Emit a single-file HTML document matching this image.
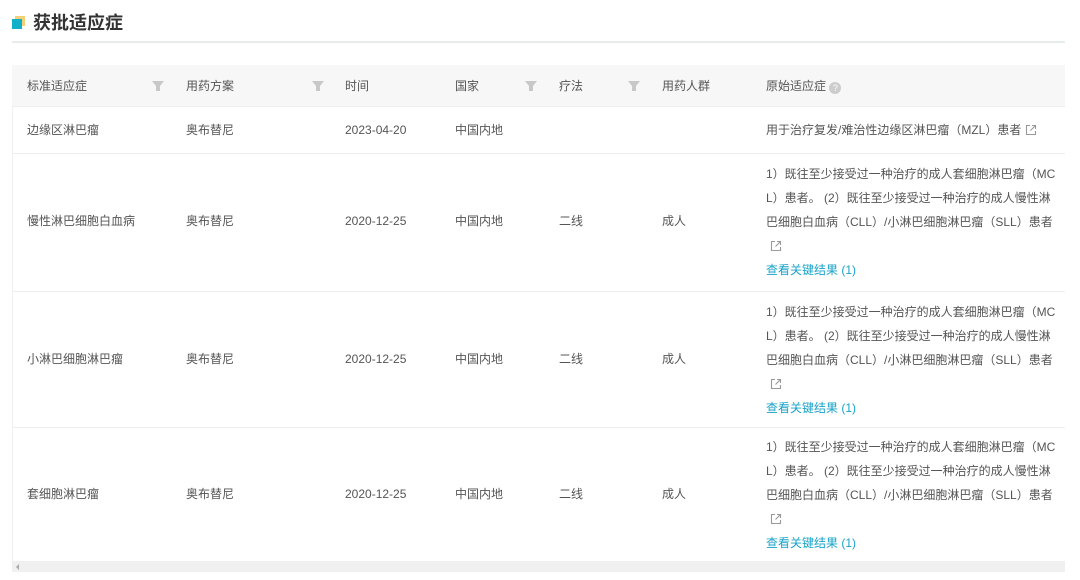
<!DOCTYPE html><html><head><meta charset="utf-8"><style>
body{margin:0;width:1080px;height:580px;background:#fff;font-family:"Liberation Sans","Noto Sans CJK SC",sans-serif;font-size:12px;color:#555;position:relative;overflow:hidden}
.a{position:absolute;white-space:nowrap;line-height:16px}
.t{position:absolute;left:12px;top:65px;width:1053px;height:496px;border-left:1px solid #f0f0f0}
.hdr{position:absolute;left:12px;top:65px;width:1053px;height:41px;background:#f7f7f7;border-bottom:1px solid #eee}
.ln{position:absolute;left:12px;width:1053px;height:1px;background:#eee}
.f{position:absolute}
.orig{position:absolute;left:766px;width:290px;line-height:24px;white-space:normal;word-break:break-all}
.lk{color:#1aa3c8}
svg.e{vertical-align:-2px;margin-left:4px}
</style></head><body>
<svg class="a" style="left:11px;top:15px" width="16" height="16"><rect x="4" y="1" width="10" height="10" fill="#f5cf76"/><rect x="1" y="4" width="10" height="10" fill="#0fb0c8"/></svg>
<div class="a" style="left:33px;top:11px;font-size:18px;line-height:24px;font-weight:bold;color:#333">获批适应症</div>
<div class="a" style="left:12px;top:41px;width:1053px;height:2px;background:#e6eceb"></div>
<div class="t"></div>
<div class="hdr"></div>
<svg width="0" height="0" style="position:absolute"><defs><symbol id="fl" viewBox="0 0 12 12"><path d="M0 1h12L8 6v5H4V6z" fill="#c8c8c8"/></symbol><symbol id="ex" viewBox="0 0 12 12"><path d="M5 1.5H1.5v9h9V7M7 1.5h3.5V5M10.5 1.5L5.5 6.5" fill="none" stroke="#999" stroke-width="1.1"/></symbol></defs></svg>
<div class="a" style="left:27px;top:78px">标准适应症</div><svg class="f" style="left:152px;top:80px" width="12" height="12"><use href="#fl"/></svg>
<div class="a" style="left:186px;top:78px">用药方案</div><svg class="f" style="left:312px;top:80px" width="12" height="12"><use href="#fl"/></svg>
<div class="a" style="left:345px;top:78px">时间</div>
<div class="a" style="left:455px;top:78px">国家</div><svg class="f" style="left:525px;top:80px" width="12" height="12"><use href="#fl"/></svg>
<div class="a" style="left:559px;top:78px">疗法</div><svg class="f" style="left:628px;top:80px" width="12" height="12"><use href="#fl"/></svg>
<div class="a" style="left:662px;top:78px">用药人群</div>
<div class="a" style="left:766px;top:78px">原始适应症 <span style="display:inline-block;width:12px;height:12px;border-radius:50%;background:#ccc;color:#fff;font-size:9px;text-align:center;line-height:12px;vertical-align:-1px">?</span></div>

<div class="a" style="left:27px;top:122px">边缘区淋巴瘤</div>
<div class="a" style="left:186px;top:122px">奥布替尼</div>
<div class="a" style="left:345px;top:122px">2023-04-20</div>
<div class="a" style="left:455px;top:122px">中国内地</div>
<div class="a" style="left:766px;top:122px">用于治疗复发/难治性边缘区淋巴瘤（MZL）患者<svg class="e" width="12" height="12"><use href="#ex"/></svg></div>
<div class="ln" style="top:153px"></div>

<div class="a" style="left:27px;top:213px">慢性淋巴细胞白血病</div>
<div class="a" style="left:186px;top:213px">奥布替尼</div>
<div class="a" style="left:345px;top:213px">2020-12-25</div>
<div class="a" style="left:455px;top:213px">中国内地</div>
<div class="a" style="left:559px;top:213px">二线</div>
<div class="a" style="left:662px;top:213px">成人</div>
<div class="orig" style="top:162px">1）既往至少接受过一种治疗的成人套细胞淋巴瘤（MCL）患者。 (2）既往至少接受过一种治疗的成人慢性淋巴细胞白血病（CLL）/小淋巴细胞淋巴瘤（SLL）患者 <svg class="e" width="12" height="12"><use href="#ex"/></svg><br><span class="lk">查看关键结果 (1)</span></div>
<div class="ln" style="top:291px"></div>

<div class="a" style="left:27px;top:351px">小淋巴细胞淋巴瘤</div>
<div class="a" style="left:186px;top:351px">奥布替尼</div>
<div class="a" style="left:345px;top:351px">2020-12-25</div>
<div class="a" style="left:455px;top:351px">中国内地</div>
<div class="a" style="left:559px;top:351px">二线</div>
<div class="a" style="left:662px;top:351px">成人</div>
<div class="orig" style="top:300px">1）既往至少接受过一种治疗的成人套细胞淋巴瘤（MCL）患者。 (2）既往至少接受过一种治疗的成人慢性淋巴细胞白血病（CLL）/小淋巴细胞淋巴瘤（SLL）患者 <svg class="e" width="12" height="12"><use href="#ex"/></svg><br><span class="lk">查看关键结果 (1)</span></div>
<div class="ln" style="top:427px"></div>

<div class="a" style="left:27px;top:486px">套细胞淋巴瘤</div>
<div class="a" style="left:186px;top:486px">奥布替尼</div>
<div class="a" style="left:345px;top:486px">2020-12-25</div>
<div class="a" style="left:455px;top:486px">中国内地</div>
<div class="a" style="left:559px;top:486px">二线</div>
<div class="a" style="left:662px;top:486px">成人</div>
<div class="orig" style="top:435px">1）既往至少接受过一种治疗的成人套细胞淋巴瘤（MCL）患者。 (2）既往至少接受过一种治疗的成人慢性淋巴细胞白血病（CLL）/小淋巴细胞淋巴瘤（SLL）患者 <svg class="e" width="12" height="12"><use href="#ex"/></svg><br><span class="lk">查看关键结果 (1)</span></div>

<div class="a" style="left:12px;top:561px;width:1053px;height:11px;background:#f0f0f0"></div>
<div class="a" style="left:16px;top:564px;width:0;height:0;border-top:3px solid transparent;border-bottom:3px solid transparent;border-right:3px solid #aaa"></div>
</body></html>
